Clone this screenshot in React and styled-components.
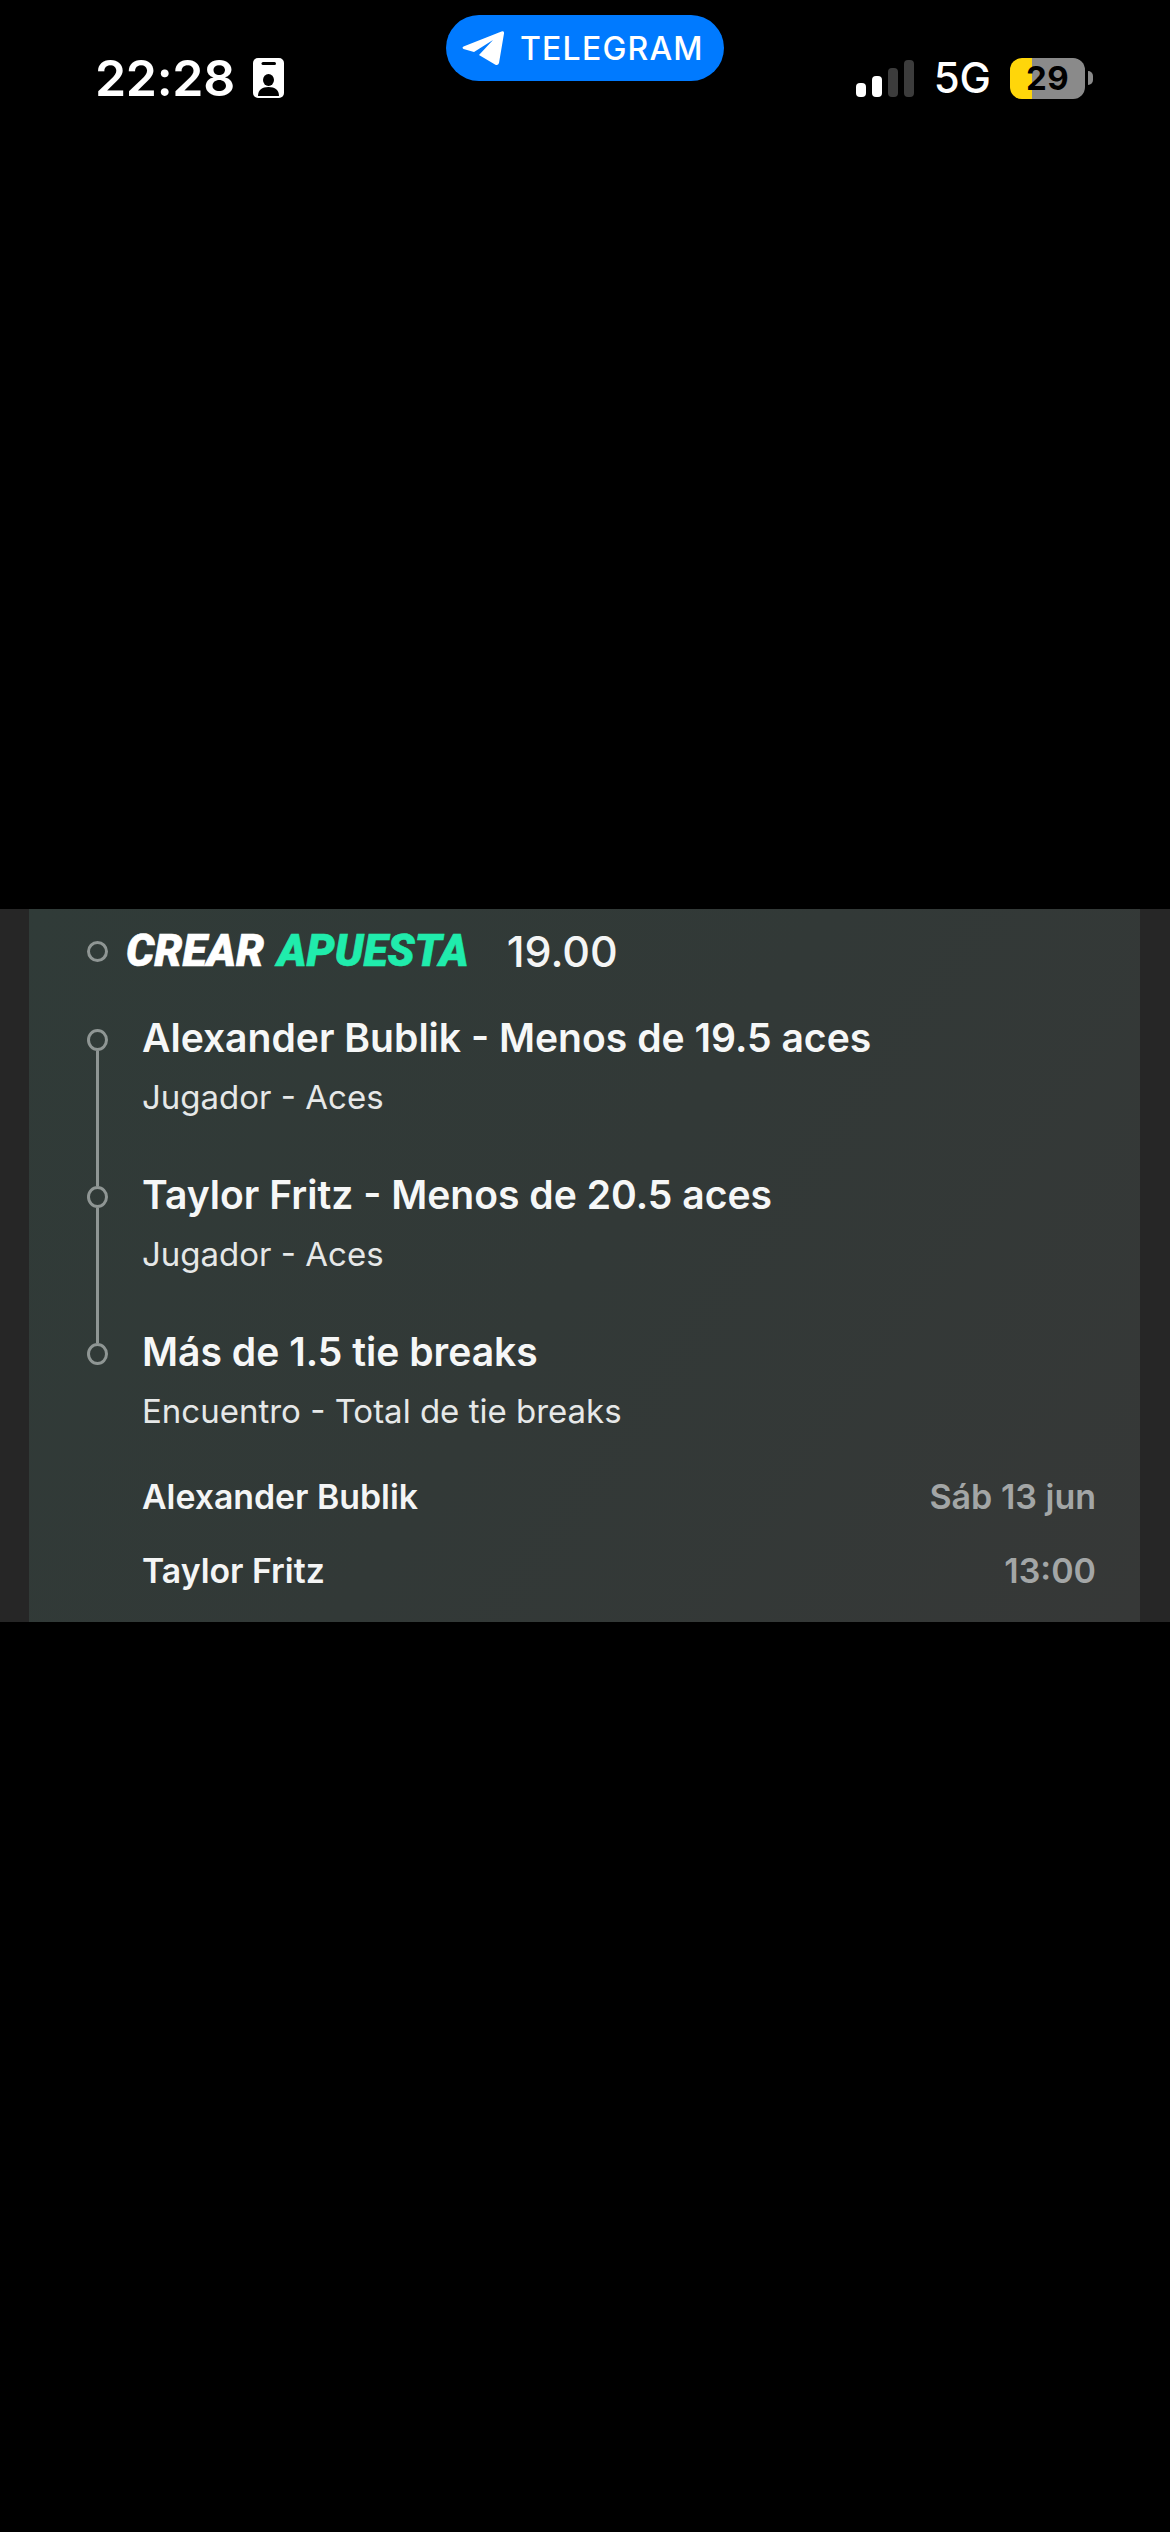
import React from "react";
import styled, { createGlobalStyle } from "styled-components";

const Global = createGlobalStyle`
  html, body { margin: 0; padding: 0; background: #000; }
  * { box-sizing: border-box; }
  body { font-family: Inter, "Liberation Sans", sans-serif; color: #fff; }
`;
const Page = styled.div`
  width: 1170px; height: 2532px; background: #000; overflow: hidden;
`;
const TopArea = styled.div`height: 909px;`;
const StatusBar = styled.div`
  display: grid; grid-template-columns: 1fr auto 1fr;
  padding: 15px 77px 0 77px;
`;
const LeftGroup = styled.div`display: flex; align-items: center; gap: 18px; padding: 41px 0 0 18px; height: 85px;`;
const Clock = styled.div`font-size: 50px; line-height: 44px; font-weight: 600; letter-spacing: -0.3px;`;
const Pill = styled.div`
  width: 278px; height: 66px; border-radius: 33px; background: #007aff;
  display: flex; align-items: center; padding-left: 16px; gap: 16px;
`;
const PillText = styled.span`font-size: 32px; font-weight: 500; letter-spacing: 1.2px;`;
const RightGroup = styled.div`
  display: flex; justify-content: flex-end; align-items: center; padding-top: 41px; height: 85px;
`;
const FiveG = styled.div`font-size: 42px; line-height: 44px; font-weight: 500; margin: 0 19px 0 20px;`;
const Battery = styled.div`display: flex; align-items: center; gap: 3px;`;
const BatteryBody = styled.div`
  width: 75px; height: 41px; border-radius: 12px; display: flex; align-items: center; justify-content: center;
  background: linear-gradient(90deg, #ffd60a 0 29%, #8a8a8a 29% 100%);
  color: #000; font-size: 33px; font-weight: 700; letter-spacing: 0.5px;
`;
const BatteryNub = styled.div`width: 5px; height: 14px; background: #8a8a8a; border-radius: 0 6px 6px 0;`;

const Band = styled.section`
  height: 713px; background: #262626; padding: 0 30px 0 29px; display: flex;
`;
const Card = styled.div`
  flex: 1; padding: 0 44px 0 58px; display: flex; flex-direction: column;
  background: linear-gradient(125deg, #303b38 0%, #323937 50%, #363837 100%);
`;
const Header = styled.div`display: flex; align-items: center; height: 84px; margin-bottom: 34px;`;
const HeaderDot = styled.span`
  width: 21px; height: 21px; border-radius: 50%; border: 3px solid #8f9694; flex: none;
`;
const Title = styled.div`
  margin-left: 18px; font-family: Roboto, sans-serif; font-style: italic; font-weight: 900;
  font-size: 44.500px; word-spacing: 2px; white-space: nowrap; -webkit-text-stroke: 0.6px currentColor;
`;
const Accent = styled.span`color: #20ecac;`;
const Odds = styled.div`margin-left: 38px; font-size: 43px; font-weight: 500; color: #f4f5f5;`;
const Row = styled.div`display: flex; height: 157px;`;
const LastRow = styled(Row)`height: 112px;`;
const Marker = styled.div`
  width: 21px; flex: none; display: flex; flex-direction: column; align-items: center;
  margin: 2px 34px -2px 0;
`;
const Dot = styled.span`
  width: 21px; height: 22px; border-radius: 50%; border: 3px solid #8f9694; flex: none;
`;
const Line = styled.span`width: 2.5px; flex: 1; background: #8f9694;`;
const RowBody = styled.div`display: flex; flex-direction: column;`;
const RowTitle = styled.div`font-size: 39.100px; line-height: 22px; font-weight: 600; color: #f6f7f7; white-space: nowrap;`;
const RowSub = styled.div`font-size: 33px; line-height: 40px; margin-top: 28px; color: #e6e8e8; white-space: nowrap;`;
const MatchList = styled.div`padding-top: 6px;`;
const MatchRow = styled.div`
  display: flex; justify-content: space-between; align-items: center; height: 74px; padding-left: 55px;
`;
const Player = styled.div`font-size: 33.800px; font-weight: 600; color: #f4f5f5;`;
const When = styled.div`font-size: 34px; font-weight: 600; color: #a3a6a6;`;

const TelegramIcon = () => (
  <svg width="42" height="35" viewBox="0 0 42 35" fill="#fff">
    <path d="M39.500 .5 L1.500 15.500 Q-.5 16.800 1.500 18 L12 21 L31 9 L17 24 L33 33.500 Q36 35 37 32 L42 2.500 Q42.300 -.2 39.500 .5 Z" />
  </svg>
);
const BadgeIcon = () => (
  <svg width="31" height="40" viewBox="0 0 31 40">
    <rect width="31" height="40" rx="5" fill="#fff" />
    <rect x="8.500" y="4" width="14.500" height="3" rx="1.500" fill="#000" />
    <ellipse cx="15.500" cy="22" rx="5.500" ry="6" fill="#000" />
    <path d="M5 38 C5 32 9 29 15.500 29 C22 29 26 32 26 38 Z" fill="#000" />
  </svg>
);
const SignalIcon = () => (
  <svg width="58" height="37" viewBox="0 0 58 37">
    <rect x="0" y="23" width="10" height="14" rx="4" fill="#fff" />
    <rect x="16" y="16" width="10" height="21" rx="4" fill="#fff" />
    <rect x="32" y="8" width="10" height="29" rx="4" fill="#3c3c3c" />
    <rect x="48" y="0" width="10" height="37" rx="4" fill="#3c3c3c" />
  </svg>
);

const legs = [
  { t: "Alexander Bublik - Menos de 19.5 aces", s: "Jugador - Aces" },
  { t: "Taylor Fritz - Menos de 20.5 aces", s: "Jugador - Aces" },
];

export default function App() {
  return (
    <Page>
      <Global />
      <TopArea>
        <StatusBar>
          <LeftGroup>
            <Clock>22:28</Clock>
            <BadgeIcon />
          </LeftGroup>
          <Pill>
            <TelegramIcon />
            <PillText>TELEGRAM</PillText>
          </Pill>
          <RightGroup>
            <SignalIcon />
            <FiveG>5G</FiveG>
            <Battery>
              <BatteryBody>29</BatteryBody>
              <BatteryNub />
            </Battery>
          </RightGroup>
        </StatusBar>
      </TopArea>
      <Band>
        <Card>
          <Header>
            <HeaderDot />
            <Title>CREAR <Accent>APUESTA</Accent></Title>
            <Odds>19.00</Odds>
          </Header>
          {legs.map((l) => (
            <Row key={l.t}>
              <Marker><Dot /><Line /></Marker>
              <RowBody>
                <RowTitle>{l.t}</RowTitle>
                <RowSub>{l.s}</RowSub>
              </RowBody>
            </Row>
          ))}
          <LastRow>
            <Marker><Dot /></Marker>
            <RowBody>
              <RowTitle>Más de 1.5 tie breaks</RowTitle>
              <RowSub>Encuentro - Total de tie breaks</RowSub>
            </RowBody>
          </LastRow>
          <MatchList>
            <MatchRow><Player>Alexander Bublik</Player><When>Sáb 13 jun</When></MatchRow>
            <MatchRow><Player>Taylor Fritz</Player><When>13:00</When></MatchRow>
          </MatchList>
        </Card>
      </Band>
    </Page>
  );
}
